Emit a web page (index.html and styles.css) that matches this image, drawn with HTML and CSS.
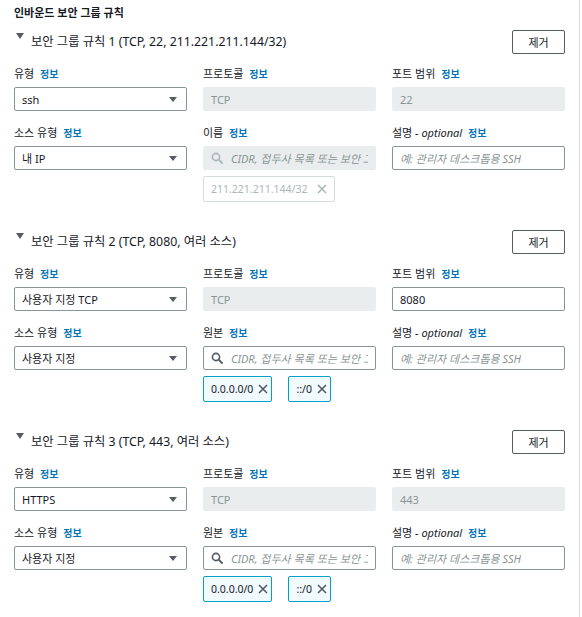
FILE: index.html
```html
<!DOCTYPE html>
<html lang="ko">
<head>
<meta charset="utf-8">
<link rel="stylesheet" href="styles.css">
</head>
<body>
<div class="panel">
  <h2 class="title">인바운드 보안 그룹 규칙</h2>

  <section class="rule">
    <div class="rule-head">
      <span class="caret"></span>
      <span class="rule-name">보안 그룹 규칙 1 (TCP, 22, 211.221.211.144/32)</span>
      <button class="btn">제거</button>
    </div>
    <div class="grid">
      <div class="field">
        <div class="label">유형 <a class="info">정보</a></div>
        <div class="select"><span>ssh</span><span class="arrow"></span></div>
      </div>
      <div class="field">
        <div class="label">프로토콜 <a class="info">정보</a></div>
        <div class="input disabled">TCP</div>
      </div>
      <div class="field">
        <div class="label">포트 범위 <a class="info">정보</a></div>
        <div class="input disabled">22</div>
      </div>
      <div class="field">
        <div class="label">소스 유형 <a class="info">정보</a></div>
        <div class="select"><span>내 IP</span><span class="arrow"></span></div>
      </div>
      <div class="field">
        <div class="label">이름 <a class="info">정보</a></div>
        <div class="input disabled search">
          <svg class="mag" viewBox="0 0 12 12" width="12" height="12"><circle cx="5" cy="5" r="3.6" fill="none" stroke="currentColor" stroke-width="1.6"/><line x1="7.7" y1="7.7" x2="11" y2="11" stroke="currentColor" stroke-width="1.8" stroke-linecap="round"/></svg>
          <span class="ph">CIDR, 접두사 목록 또는 보안 그룹</span>
        </div>
        <div class="tokens">
          <span class="token off">211.221.211.144/32<svg class="x" viewBox="0 0 10 10" width="10" height="10"><path d="M1 1L9 9M9 1L1 9" stroke="currentColor" stroke-width="1.5"/></svg></span>
        </div>
      </div>
      <div class="field">
        <div class="label">설명 <i>- optional</i> <a class="info">정보</a></div>
        <div class="input"><span class="ph">예: 관리자 데스크톱용 SSH</span></div>
      </div>
    </div>
  </section>

  <section class="rule">
    <div class="rule-head">
      <span class="caret"></span>
      <span class="rule-name">보안 그룹 규칙 2 (TCP, 8080, 여러 소스)</span>
      <button class="btn">제거</button>
    </div>
    <div class="grid">
      <div class="field">
        <div class="label">유형 <a class="info">정보</a></div>
        <div class="select"><span>사용자 지정 TCP</span><span class="arrow"></span></div>
      </div>
      <div class="field">
        <div class="label">프로토콜 <a class="info">정보</a></div>
        <div class="input disabled">TCP</div>
      </div>
      <div class="field">
        <div class="label">포트 범위 <a class="info">정보</a></div>
        <div class="input">8080</div>
      </div>
      <div class="field">
        <div class="label">소스 유형 <a class="info">정보</a></div>
        <div class="select"><span>사용자 지정</span><span class="arrow"></span></div>
      </div>
      <div class="field">
        <div class="label">원본 <a class="info">정보</a></div>
        <div class="input search">
          <svg class="mag dark" viewBox="0 0 12 12" width="12" height="12"><circle cx="5" cy="5" r="3.6" fill="none" stroke="currentColor" stroke-width="1.6"/><line x1="7.7" y1="7.7" x2="11" y2="11" stroke="currentColor" stroke-width="1.8" stroke-linecap="round"/></svg>
          <span class="ph">CIDR, 접두사 목록 또는 보안 그룹</span>
        </div>
        <div class="tokens">
          <span class="token">0.0.0.0/0<svg class="x" viewBox="0 0 10 10" width="10" height="10"><path d="M1 1L9 9M9 1L1 9" stroke="currentColor" stroke-width="1.6"/></svg></span>
          <span class="token">::/0<svg class="x" viewBox="0 0 10 10" width="10" height="10"><path d="M1 1L9 9M9 1L1 9" stroke="currentColor" stroke-width="1.6"/></svg></span>
        </div>
      </div>
      <div class="field">
        <div class="label">설명 <i>- optional</i> <a class="info">정보</a></div>
        <div class="input"><span class="ph">예: 관리자 데스크톱용 SSH</span></div>
      </div>
    </div>
  </section>

  <section class="rule">
    <div class="rule-head">
      <span class="caret"></span>
      <span class="rule-name">보안 그룹 규칙 3 (TCP, 443, 여러 소스)</span>
      <button class="btn">제거</button>
    </div>
    <div class="grid">
      <div class="field">
        <div class="label">유형 <a class="info">정보</a></div>
        <div class="select"><span>HTTPS</span><span class="arrow"></span></div>
      </div>
      <div class="field">
        <div class="label">프로토콜 <a class="info">정보</a></div>
        <div class="input disabled">TCP</div>
      </div>
      <div class="field">
        <div class="label">포트 범위 <a class="info">정보</a></div>
        <div class="input disabled">443</div>
      </div>
      <div class="field">
        <div class="label">소스 유형 <a class="info">정보</a></div>
        <div class="select"><span>사용자 지정</span><span class="arrow"></span></div>
      </div>
      <div class="field">
        <div class="label">원본 <a class="info">정보</a></div>
        <div class="input search">
          <svg class="mag dark" viewBox="0 0 12 12" width="12" height="12"><circle cx="5" cy="5" r="3.6" fill="none" stroke="currentColor" stroke-width="1.6"/><line x1="7.7" y1="7.7" x2="11" y2="11" stroke="currentColor" stroke-width="1.8" stroke-linecap="round"/></svg>
          <span class="ph">CIDR, 접두사 목록 또는 보안 그룹</span>
        </div>
        <div class="tokens">
          <span class="token">0.0.0.0/0<svg class="x" viewBox="0 0 10 10" width="10" height="10"><path d="M1 1L9 9M9 1L1 9" stroke="currentColor" stroke-width="1.6"/></svg></span>
          <span class="token">::/0<svg class="x" viewBox="0 0 10 10" width="10" height="10"><path d="M1 1L9 9M9 1L1 9" stroke="currentColor" stroke-width="1.6"/></svg></span>
        </div>
      </div>
      <div class="field">
        <div class="label">설명 <i>- optional</i> <a class="info">정보</a></div>
        <div class="input"><span class="ph">예: 관리자 데스크톱용 SSH</span></div>
      </div>
    </div>
  </section>
</div>
</body>
</html>
```

FILE: styles.css
```css
* { box-sizing: border-box; }
html, body { margin: 0; padding: 0; background: #fff; }
body {
  font-family: "Noto Sans", "Noto Sans CJK KR", sans-serif;
  color: #16191f;
  font-size: 12px;
}
.panel {
  width: 580px;
  min-height: 617px;
  border-right: 1px solid #d5dbdb;
  padding: 5px 14px 0 14px;
}
.title {
  margin: 0;
  font-size: 11px;
  font-weight: 700;
  line-height: 16px;
  height: 16px;
}
.rule { margin-top: 9px; }
.rule + .rule { margin-top: 28px; }
.rule-head {
  display: flex;
  align-items: center;
  height: 24px;
}
.caret {
  width: 0; height: 0;
  border-left: 4px solid transparent;
  border-right: 4px solid transparent;
  border-top: 6px solid #545b64;
  margin: 0 7px 0 2px;
  align-self: flex-start;
  margin-top: 3px;
}
.rule-name {
  font-size: 12.3px;
  line-height: 18px;
  flex: 1;
}
.btn {
  width: 53px;
  height: 24px;
  border: 1px solid #545b64;
  border-radius: 2px;
  background: #fff;
  font-family: inherit;
  font-size: 11px;
  color: #16191f;
  padding: 0;
}
.grid {
  display: grid;
  grid-template-columns: 1fr 1fr 1fr;
  column-gap: 16px;
  row-gap: 14px;
  margin-top: 12px;
}
.field { min-width: 0; }
.label {
  font-size: 11px;
  line-height: 16px;
  margin-bottom: 5px;
  white-space: nowrap;
}
.label i { color: #16191f; }
.info {
  color: #0073bb;
  font-weight: 700;
  font-size: 10px;
  margin-left: 3px;
}
.select, .input {
  height: 24px;
  border: 1px solid #879596;
  border-radius: 2px;
  display: flex;
  align-items: center;
  padding: 0 7px;
  font-size: 11px;
  white-space: nowrap;
  overflow: hidden;
}
.select { justify-content: space-between; }
.arrow {
  width: 0; height: 0;
  border-left: 4px solid transparent;
  border-right: 4px solid transparent;
  border-top: 5px solid #545b64;
  margin-right: 2px;
}
.input.disabled {
  background: #eaeded;
  border-color: #eaeded;
  color: #879596;
}
.ph {
  color: #879596;
  font-style: italic;
  overflow: hidden;
  white-space: nowrap;
}
.search { gap: 8px; }
.mag { color: #aab7b8; flex: none; }
.mag.dark { color: #545b64; }
.tokens {
  display: flex;
  gap: 16px;
  margin-top: 6px;
}
.token {
  height: 26px;
  display: inline-flex;
  align-items: center;
  gap: 5px;
  padding: 0 3px 0 7px;
  border: 1px solid #00a1c9;
  border-radius: 2px;
  background: #f1faff;
  font-size: 10.5px;
  color: #16191f;
}
.token .x { color: #545b64; }
.token.off {
  gap: 10px;
  padding-right: 7px;
  border-color: #d5dbdb;
  background: #fff;
  color: #aab7b8;
}
.token.off .x { color: #aab7b8; }
```
